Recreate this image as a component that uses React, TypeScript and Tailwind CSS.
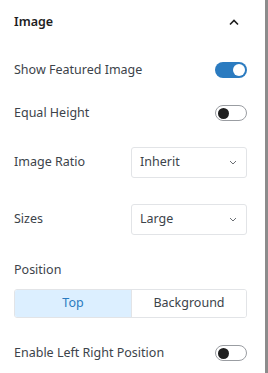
import { useState } from "react";

function Toggle({ on, onChange }: { on: boolean; onChange: () => void }) {
  return (
    <button
      type="button"
      onClick={onChange}
      className={
        on
          ? "flex h-4 w-8 items-center justify-end rounded-full bg-[#2b7bc0] px-[2px]"
          : "flex h-4 w-8 items-center justify-start rounded-full border border-[#9a9da2] bg-white px-[2px]"
      }
    >
      <span className={on ? "h-3 w-3 rounded-full bg-white" : "h-[11px] w-[11px] rounded-full bg-[#1e1e1e]"} />
    </button>
  );
}

function Chevron({ up }: { up?: boolean }) {
  return up ? (
    <svg width="10" height="7" viewBox="0 0 10 7" fill="none">
      <path d="M1 5.5 5 1.5l4 4" stroke="#1e1e1e" strokeWidth="1.6" />
    </svg>
  ) : (
    <svg width="8" height="5" viewBox="0 0 8 5" fill="none">
      <path d="M1 1l3 3 3-3" stroke="#6b6f74" strokeWidth="1" />
    </svg>
  );
}

function Row({ label, children }: { label: string; children: React.ReactNode }) {
  return (
    <div className="flex items-center justify-between">
      <span className="text-[12.5px] text-[#3c434a]">{label}</span>
      {children}
    </div>
  );
}

function Select({ value }: { value: string }) {
  return (
    <div className="flex h-[31px] w-[116px] items-center justify-between rounded-[3px] border border-[#e2e4e7] bg-white pl-2 pr-[9px]">
      <span className="text-[12.5px] text-[#3c434a]">{value}</span>
      <Chevron />
    </div>
  );
}

export default function App() {
  const [featured, setFeatured] = useState(true);
  const [equal, setEqual] = useState(false);
  const [leftRight, setLeftRight] = useState(false);
  const [pos, setPos] = useState("Top");

  return (
    <div className="flex h-[373px] w-[268px] bg-white font-['Noto_Sans',sans-serif]">
      <div className="flex flex-1 flex-col pl-[14px] pr-[18px]">
        <div className="flex h-[44px] items-center justify-between">
          <span className="text-[12.5px] font-semibold text-[#1e1e1e]">Image</span>
          <span className="mr-[8px] flex">
            <Chevron up />
          </span>
        </div>

        <div className="mt-[10px] flex h-[32px] flex-col justify-center">
          <Row label="Show Featured Image">
            <Toggle on={featured} onChange={() => setFeatured(!featured)} />
          </Row>
        </div>
        <div className="mt-[11px] flex h-[32px] flex-col justify-center">
          <Row label="Equal Height">
            <Toggle on={equal} onChange={() => setEqual(!equal)} />
          </Row>
        </div>

        <div className="mt-[18px]">
          <Row label="Image Ratio">
            <Select value="Inherit" />
          </Row>
        </div>
        <div className="mt-[26px]">
          <Row label="Sizes">
            <Select value="Large" />
          </Row>
        </div>

        <div className="mt-[25px] flex h-[20px] items-center text-[12.5px] text-[#3c434a]">Position</div>
        <div className="mt-[9px] flex h-[29px] overflow-hidden rounded-[3px] border border-[#e2e4e7]">
          {["Top", "Background"].map((p, i) => (
            <button
              key={p}
              type="button"
              onClick={() => setPos(p)}
              className={
                (i === 0 ? "w-[117px] border-r border-[#e2e4e7] " : "flex-1 ") +
                (pos === p ? "bg-[#dcefff] text-[#2b7bc0]" : "bg-white text-[#3c434a]") +
                " text-[12.5px]"
              }
            >
              {p}
            </button>
          ))}
        </div>

        <div className="mt-[19px] flex h-[32px] flex-col justify-center">
          <Row label="Enable Left Right Position">
            <Toggle on={leftRight} onChange={() => setLeftRight(!leftRight)} />
          </Row>
        </div>
      </div>
      <div className="w-[3px] bg-[#8c8c8c]" />
    </div>
  );
}
